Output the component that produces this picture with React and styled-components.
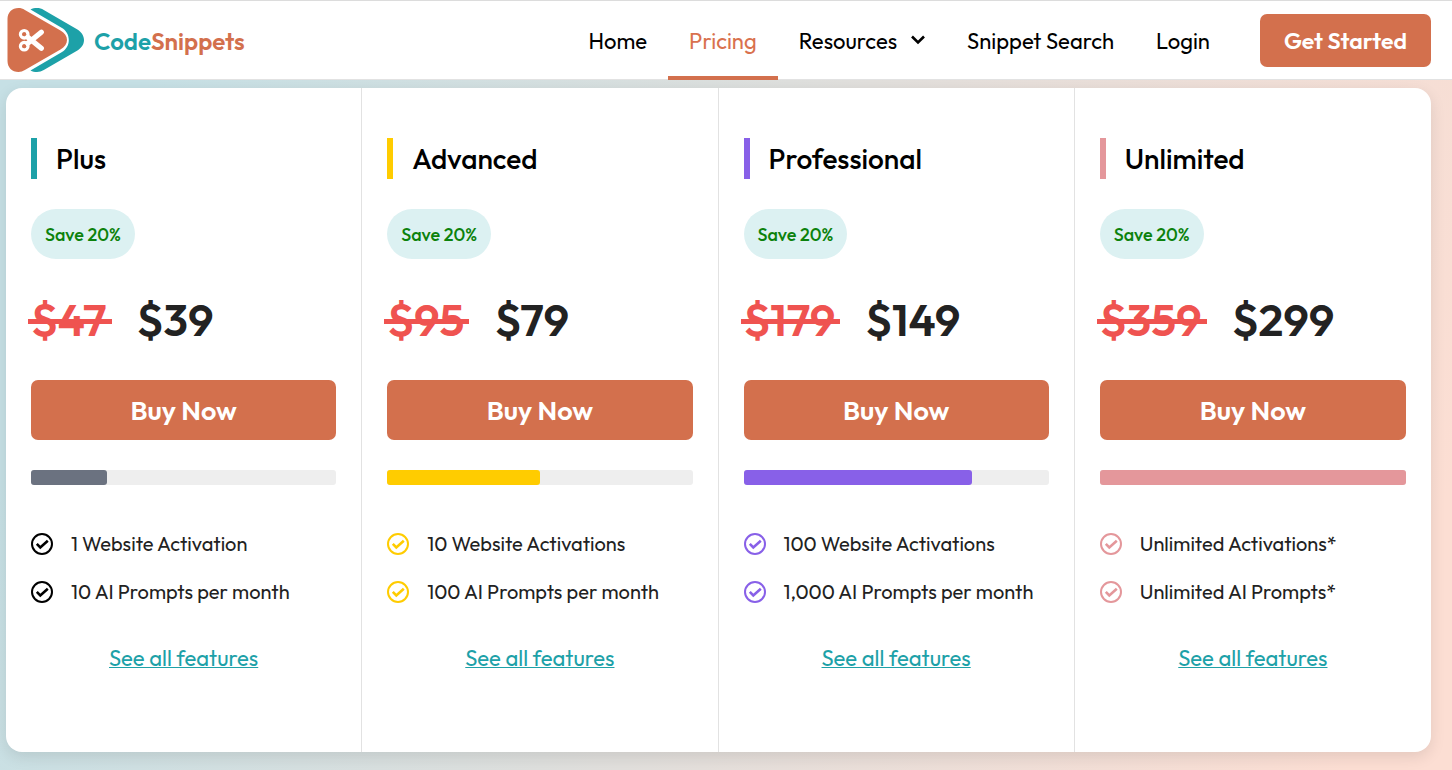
import styled, { createGlobalStyle } from 'styled-components';

const plans = [
    {
        name: 'Plus',
        accent: '#1da1a8',
        bar: '#6b7280',
        check: '#000000',
        before: '$47',
        price: '$39',
        fill: 25,
        features: ['1 Website Activation', '10 AI Prompts per month'],
    },
    {
        name: 'Advanced',
        accent: '#ffcc00',
        bar: '#ffcc00',
        check: '#ffcc00',
        before: '$95',
        price: '$79',
        fill: 50,
        features: ['10 Website Activations', '100 AI Prompts per month'],
    },
    {
        name: 'Professional',
        accent: '#8860e8',
        bar: '#8860e8',
        check: '#8860e8',
        before: '$179',
        price: '$149',
        fill: 75,
        features: ['100 Website Activations', '1,000 AI Prompts per month'],
    },
    {
        name: 'Unlimited',
        accent: '#e4979b',
        bar: '#e4979b',
        check: '#e4979b',
        before: '$359',
        price: '$299',
        fill: 100,
        features: ['Unlimited Activations*', 'Unlimited AI Prompts*'],
    },
];

const LogoMark = () => (
    <svg width="78" height="66" viewBox="7 7 78 66" aria-hidden="true">
        <path
            fill="#1da1a8"
            d="M30.5 9.6C32.5 8.4 34.5 8 37 8c2.500 0 4.600.6 6.800 1.900L77 29.200C81.500 31.900 84 35.600 84 40s-2.500 8.100-7 10.800L43.800 70.100C41.600 71.400 39.500 72 37 72c-2.500 0-4.500-.4-6.500-1.600L61.600 52.300C66.200 49.600 68.800 45.200 68.800 40s-2.600-9.600-7.200-12.300z"
        />
        <path
            fill="#d3704d"
            d="M7.500 19C7.500 12.500 12 8 18.500 8c2.400 0 4.200.6 6.400 1.900L60.500 30.500C64.700 32.900 67 36 67 40s-2.300 7.100-6.500 9.500L24.900 70.100C22.700 71.400 20.900 72 18.500 72 12 72 7.500 67.500 7.500 61z"
        />
        <g fill="none" stroke="#ffffff">
            <circle cx="24.200" cy="34.300" r="3.700" strokeWidth="3.400" />
            <circle cx="24.200" cy="46.200" r="3.700" strokeWidth="3.400" />
            <path d="M27.500 43.500 41.300 32.200" strokeWidth="5.200" strokeLinecap="round" />
            <path d="M27.500 37 41.300 48.300" strokeWidth="5.200" strokeLinecap="round" />
        </g>
        <circle cx="24.200" cy="34.300" r="2" fill="#d3704d" />
        <circle cx="24.200" cy="46.200" r="2" fill="#d3704d" />
    </svg>
);

const CheckIcon = ({ color }) => (
    <svg width="22" height="22" viewBox="0 0 22 22" fill="none" stroke={color} aria-hidden="true">
        <circle cx="11" cy="11" r="10" strokeWidth="2" />
        <path d="m5.800 10.900 3.500 3.600 7.500-6.700" strokeWidth="2.600" />
    </svg>
);

const ChevronIcon = () => (
    <svg width="14" height="14" viewBox="0 0 14 14" fill="none" stroke="currentColor" aria-hidden="true">
        <path d="m1 2.500 6 6 6-6" strokeWidth="2.600" />
    </svg>
);

const Plan = ({ plan }) => (
    <PlanColumn>
        <PlanName $color={plan.accent}>{plan.name}</PlanName>
        <Badge>Save 20%</Badge>
        <Prices>
            <OldPrice>{plan.before}</OldPrice>
            <Price>{plan.price}</Price>
        </Prices>
        <BuyButton type="button">Buy Now</BuyButton>
        <Track>
            <Fill $color={plan.bar} style={{ width: `${plan.fill}%` }} />
        </Track>
        <Features>
            {plan.features.map((feature) => (
                <Feature key={feature}>
                    <CheckIcon color={plan.check} />
                    {feature}
                </Feature>
            ))}
        </Features>
        <FeaturesLink href="#features">See all features</FeaturesLink>
    </PlanColumn>
);

const App = () => {
    return (
        <Page>
            <GlobalStyle />
            <Header>
                <Logo href="#home">
                    <LogoMark />
                    <LogoText>
                        Code<span>Snippets</span>
                    </LogoText>
                </Logo>
                <Nav>
                    <NavLink href="#home">Home</NavLink>
                    <NavLink href="#pricing" $active aria-current="page">Pricing</NavLink>
                    <NavLink href="#resources">
                        Resources
                        <ChevronIcon />
                    </NavLink>
                    <NavLink href="#search">Snippet Search</NavLink>
                    <NavLink href="#login">Login</NavLink>
                </Nav>
                <StartButton type="button">Get Started</StartButton>
            </Header>
            <Main>
                <Card>
                    {plans.map((plan) => (
                        <Plan key={plan.name} plan={plan} />
                    ))}
                </Card>
            </Main>
        </Page>
    );
}

const GlobalStyle = createGlobalStyle`
  * {
    box-sizing: border-box;
  }

  body {
    margin: 0;
    font-family: Outfit, Lato, "Open Sans", sans-serif;
    color: #222222;
  }

  button {
    font-family: inherit;
    border: none;
    cursor: pointer;
  }
`;

const Page = styled.div`
  display: flex;
  flex-direction: column;
  min-height: 100vh;
  background: linear-gradient(110deg, #c6e0e5 10%, #fcded3 94%);
`;

const Header = styled.header`
  display: flex;
  align-items: stretch;
  height: 80px;
  padding: 0 21px 0 7px;
  background: #ffffff;
  border-top: 1px solid #dcdcdc;
  border-bottom: 1px solid #e2e2e2;
`;

const Logo = styled.a`
  display: flex;
  align-items: center;
  gap: 9px;
  margin-right: auto;
  text-decoration: none;
`;

const LogoText = styled.span`
  padding-top: 2px;
  font-size: 24px;
  font-weight: 600;
  color: #1da1a8;

  span {
    color: #d3704d;
  }
`;

const Nav = styled.nav`
  display: flex;
  margin-right: 29px;
`;

const NavLink = styled.a`
  display: flex;
  align-items: center;
  gap: 14px;
  padding: 4px 21px 0;
  margin-bottom: -1px;
  border-bottom: 4px solid ${(props) => (props.$active ? '#d3704d' : 'transparent')};
  color: ${(props) => (props.$active ? '#d9714e' : '#000000')};
  font-size: 22px;
  font-weight: 400;
  text-decoration: none;
  white-space: nowrap;
`;

const StartButton = styled.button`
  align-self: center;
  height: 53px;
  padding: 0 24px;
  border-radius: 7px;
  background: #d3704d;
  color: #ffffff;
  font-size: 23px;
  font-weight: 600;
  white-space: nowrap;
`;

const Main = styled.main`
  flex: 1;
  padding: 8px 21px 18px 6px;
`;

const Card = styled.section`
  display: grid;
  grid-template-columns: repeat(4, 1fr);
  background: #ffffff;
  border-radius: 16px;
  box-shadow: 0 5px 15px rgba(0, 0, 0, 0.1);
`;

const PlanColumn = styled.article`
  display: flex;
  flex-direction: column;
  align-items: flex-start;
  padding: 50px 25px 79px;
  border-right: 1px solid #e2e2e2;

  &:last-child {
    border-right: none;
  }
`;

const PlanName = styled.h2`
  margin: 0 0 30px;
  padding-left: 19px;
  border-left: 6px solid ${(props) => props.$color};
  color: #000000;
  font-size: 28px;
  font-weight: 500;
  line-height: 41px;
`;

const Badge = styled.span`
  padding: 1px 14px 0;
  border-radius: 25px;
  background: #dcf1f2;
  color: #0c820c;
  font-size: 18px;
  font-weight: 500;
  line-height: 49px;
`;

const Prices = styled.div`
  display: flex;
  gap: 30px;
  margin: 31px 0 30px;
  font-size: 45px;
  font-weight: 600;
  line-height: 60px;
`;

const OldPrice = styled.del`
  position: relative;
  color: #ef5350;
  text-decoration: none;

  &::after {
    content: "";
    position: absolute;
    top: 29px;
    left: -3px;
    right: -5px;
    height: 5px;
    background: #ef5350;
  }
`;

const Price = styled.span`
  color: #222222;
`;

const BuyButton = styled.button`
  width: 100%;
  height: 60px;
  border-radius: 7px;
  background: #d3704d;
  color: #ffffff;
  font-size: 27px;
  font-weight: 600;
`;

const Track = styled.div`
  width: 100%;
  height: 15px;
  margin: 30px 0 45px;
  border-radius: 3px;
  background: #eeeeee;
`;

const Fill = styled.div`
  height: 100%;
  border-radius: 3px;
  background: ${(props) => props.$color};
`;

const Features = styled.ul`
  display: flex;
  flex-direction: column;
  gap: 20px;
  margin: 0;
  padding: 0;
  list-style: none;
`;

const Feature = styled.li`
  display: flex;
  align-items: center;
  gap: 18px;
  font-size: 20px;
  font-weight: 400;
  line-height: 28px;
  white-space: nowrap;
`;

const FeaturesLink = styled.a`
  align-self: center;
  margin-top: 37px;
  color: #1da1a8;
  font-size: 22px;
  font-weight: 400;
  line-height: 30px;
  text-decoration-thickness: 1px;
`;

export default App;
